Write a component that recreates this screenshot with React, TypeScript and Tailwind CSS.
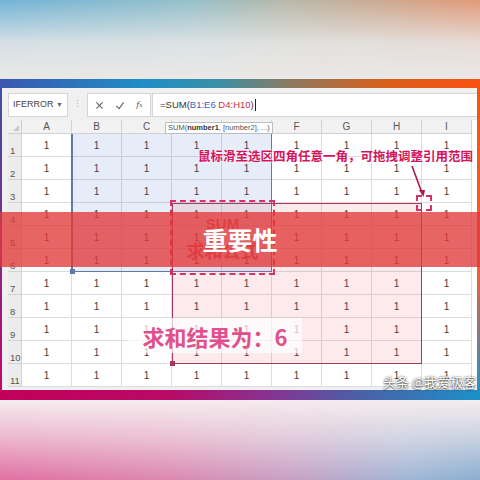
import React from 'react';

const cols = ['A', 'B', 'C', 'D', 'E', 'F', 'G', 'H', 'I'];
const rows = Array.from({ length: 11 }, (_, i) => i + 1);

const cjk = "font-['Noto_Sans_CJK_SC','Noto_Sans',sans-serif]";

function FormulaBar() {
  return (
    <div className="flex h-[32px] items-start gap-0 bg-[#f0f0f0] pt-[5px] pr-0">
      {/* name box */}
      <div className="flex h-[24px] w-[60px] items-center justify-between border border-[#d6d6d6] bg-white pl-[4px] pr-[4px] text-[9px] text-[#444]">
        <span>IFERROR</span>
        <span className="text-[7px] text-[#666]">▼</span>
      </div>
      <div className="flex h-[24px] w-[19px] items-center justify-center text-[9px] text-[#b0b0b0]">⋮</div>
      {/* icons */}
      <div className="flex h-[24px] w-[64px] items-center justify-around border border-[#d6d6d6] bg-white px-[2px] text-[#666]">
        <svg width="9" height="9" viewBox="0 0 10 10">
          <path d="M1.5 1.5 L8.5 8.5 M8.5 1.5 L1.5 8.5" stroke="#666" strokeWidth="1.2" />
        </svg>
        <svg width="10" height="9" viewBox="0 0 10 10">
          <path d="M1 5.5 L4 8.5 L9 1.5" stroke="#666" strokeWidth="1.3" fill="none" />
        </svg>
        <span className="font-['DejaVu_Serif',serif] text-[8px] italic text-[#555]">
          f<span className="text-[6px]">x</span>
        </span>
      </div>
      {/* formula input */}
      <div className="ml-[1px] flex h-[24px] flex-1 items-center border border-r-0 border-[#d6d6d6] bg-white pl-[7px] text-[9.5px] text-[#333]">
        <span>=SUM(</span>
        <span className="text-[#3864c0]">B1:E6</span>
        <span>&nbsp;</span>
        <span className="text-[#c8344a]">D4:H10</span>
        <span>)</span>
        <span className="ml-[1px] h-[12px] w-px bg-[#222]" />
      </div>
    </div>
  );
}

function Sheet() {
  return (
    <div className="relative">
      <div className="grid grid-cols-[14px_repeat(9,50px)] grid-rows-[14px_repeat(11,23px)] bg-white text-[10px]">
        {/* corner */}
        <div className="relative border-r border-b border-[#cfcfcf] bg-[#f0f0f0]">
          <div className="absolute right-[2px] bottom-[2px] h-0 w-0 border-l-[6px] border-t-[6px] border-l-transparent border-t-transparent border-b-0 border-r-[6px] border-r-[#c8c8c8]" />
        </div>
        {cols.map((c) => (
          <div
            key={c}
            className="flex items-center justify-center border-r border-b border-[#d2d2d2] bg-[#f2f2f2] text-[10px] text-[#555]"
          >
            {c}
          </div>
        ))}
        {rows.map((r) => (
          <React.Fragment key={r}>
            <div className="flex items-end border-r border-b border-[#d2d2d2] bg-[#ececec] pb-[1px] pl-[2px] text-[9.5px] leading-none text-[#555]">
              {r}
            </div>
            {cols.map((c) => (
              <div
                key={c}
                className="flex items-center justify-center border-r border-b border-[#dcdcdc] text-[10px] text-[#3a3a3a]"
              >
                1
              </div>
            ))}
          </React.Fragment>
        ))}
      </div>

      {/* blue range B1:E6 */}
      <div className="absolute top-[14px] left-[63px] h-[138px] w-[201px] border-l-2 border-r border-b border-[#5c7ca4] bg-[#3a6cc8]/12" />
      {/* red range D4:H10 */}
      <div className="absolute top-[83px] left-[164px] h-[161px] w-[250px] border-[1.5px] border-[#a8385a] bg-[#e8506e]/12" />
      <div className="absolute top-[241px] left-[162px] h-[5px] w-[5px] bg-[#a8385a]" />
      <div className="absolute top-[149px] left-[62px] h-[5px] w-[5px] bg-[#5c7ca4]" />

      {/* function tooltip */}
      <div className="absolute top-[2px] left-[157px] flex h-[12px] items-center border border-[#bdbdbd] bg-white px-[2px] text-[7.5px] leading-none whitespace-nowrap text-[#555]">
        SUM(<b className="text-[#333]">number1</b>, [number2], ...)
      </div>

      {/* dashed callout with SUM text */}
      <div className="absolute top-[80px] left-[162px] flex h-[75px] w-[105px] flex-col items-center border-2 border-dashed border-[#d8306e] pt-[14px]">
        <span className="font-['Liberation_Sans',sans-serif] text-[15px] leading-none font-bold text-[#e0505e]">SUM</span>
        <span className={`${cjk} mt-[10px] text-[18px] leading-none font-bold text-[#d4485a]`}>求和公式</span>
      </div>

      {/* handle square */}
      <div className="absolute top-[75px] left-[408px] h-[16px] w-[16px] border-2 border-dashed border-[#d8306e]" />

      {/* arrow */}
      <svg className="absolute top-[40px] left-[396px]" width="30" height="40" viewBox="0 0 30 40">
        <line x1="8" y1="6" x2="18" y2="33" stroke="#b01848" strokeWidth="1.6" />
        <polygon points="15,30 21,30 19.5,37" fill="#b01848" />
      </svg>

      {/* annotation */}
      <div
        className={`${cjk} absolute top-[30px] left-[190px] text-[12.5px] leading-none font-bold whitespace-nowrap text-[#d4145c] [text-shadow:0_0_2px_#fff,0_0_2px_#fff]`}
      >
        鼠标滑至选区四角任意一角，可拖拽调整引用范围
      </div>

      {/* result label */}
      <div className="absolute top-[198px] left-[120px] flex h-[35px] w-[174px] items-center justify-center bg-white/70">
        <span className={`${cjk} text-[22px] leading-none font-bold text-[#e0508c]`}>求和结果为：6</span>
      </div>
    </div>
  );
}

export default function App() {
  return (
    <div className="relative flex h-[480px] w-[480px] flex-col overflow-hidden font-['Liberation_Sans',sans-serif]">
      {/* blurred top backdrop */}
      <div className="h-[79px] bg-[linear-gradient(to_bottom,rgba(232,232,232,0)_0%,rgba(232,232,232,0.85)_55%,#eae8e7_100%),linear-gradient(to_right,#72b4d6_0%,#96c0ca_40%,#b8b8a8_60%,#e29a78_100%)]" />

      {/* framed screenshot */}
      <div className="flex h-[321px] flex-col">
        <div className="h-[9px] bg-[linear-gradient(to_right,#3a56ae_0%,#1e8ec6_30%,#3890a8_45%,#8a7a62_60%,#d8601c_80%,#fa5010_100%)]" />
        <div className="flex h-[302px]">
          <div className="w-[2px] bg-[linear-gradient(to_bottom,#3c50a8,#c0086a)]" />
          <div className="flex flex-1 flex-col overflow-hidden bg-[#f0f0f0] pl-[6px]">
            <FormulaBar />
            <Sheet />
          </div>
          <div className="w-[3px] bg-[linear-gradient(to_bottom,#f45412,#f06030_60%,#2890c8)]" />
        </div>
        <div className="h-[10px] bg-[linear-gradient(to_right,#c2005a_0%,#b80a66_35%,#8a3090_55%,#4a60a8_75%,#1c90c8_100%)]" />
      </div>

      {/* blurred bottom backdrop */}
      <div className="h-[80px] bg-[linear-gradient(to_bottom,#f6ecee_0%,rgba(246,236,238,0.6)_45%,rgba(246,236,238,0)_100%),linear-gradient(to_right,#e070a2_0%,#dc88b0_35%,#c8a0c4_60%,#a0b6d6_85%,#8aaed0_100%)]" />

      {/* red highlight band */}
      <div className="absolute top-[212px] right-0 left-0 flex h-[55px] items-center justify-center bg-[#e23a3a]/78">
        <span className={`${cjk} text-[25px] leading-none font-bold text-white`}>重要性</span>
      </div>

      {/* watermark */}
      <div
        className={`${cjk} absolute top-[375px] left-[383px] text-[13px] leading-none whitespace-nowrap text-white [text-shadow:0_0_2px_rgba(0,0,0,0.7),0_1px_2px_rgba(0,0,0,0.6)]`}
      >
        头条 @我爱极客
      </div>
    </div>
  );
}
